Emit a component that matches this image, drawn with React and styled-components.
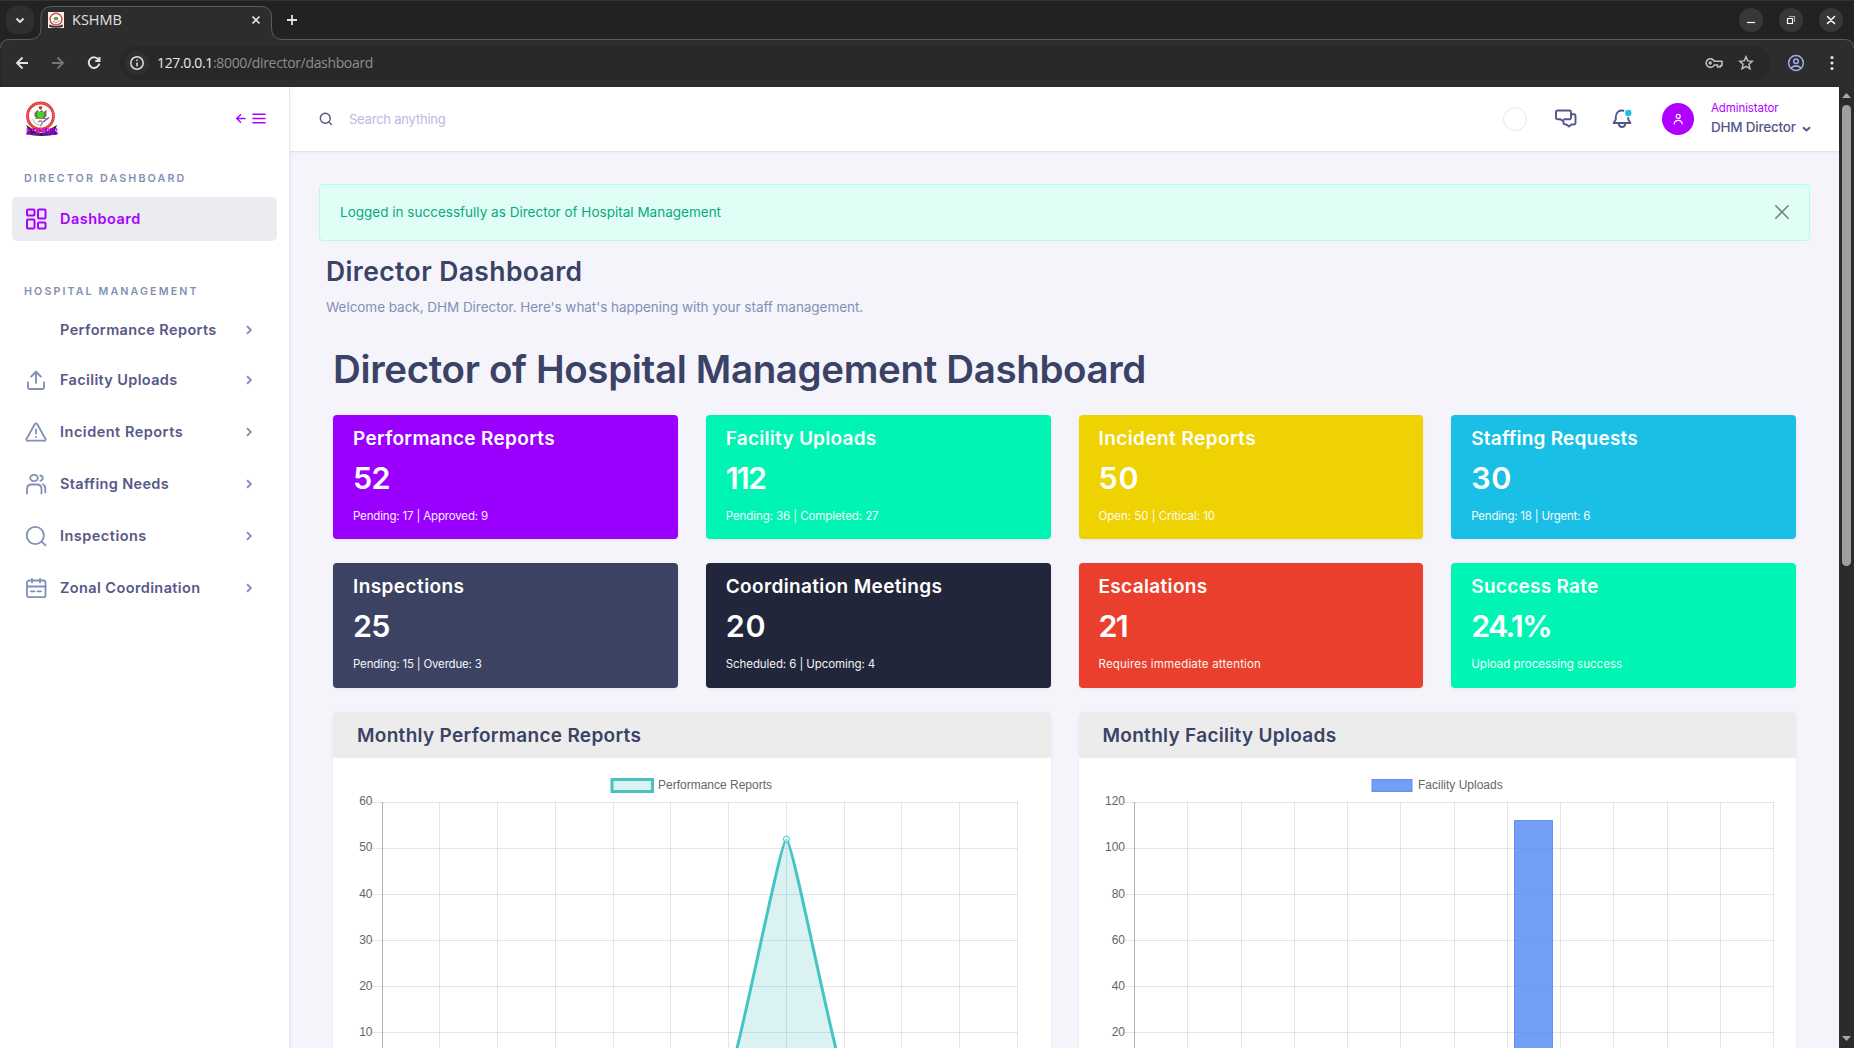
import React from 'react';
import styled, { createGlobalStyle } from 'styled-components';

const Global = createGlobalStyle`
  * { box-sizing: border-box; }
  html, body { margin: 0; padding: 0; }
  body { overflow: hidden; font-family: Inter, "Liberation Sans", sans-serif; color: #3a4266; }
  h1, h2, h3, p { margin: 0; }
  svg { display: block; flex: none; }
  button { border: 0; padding: 0; background: none; font: inherit; color: inherit; }
`;

const Window = styled.div`
  width: 1854px;
  height: 1048px;
  display: flex;
  flex-direction: column;
  overflow: hidden;
  background: #222;
`;

/* ---------- browser frame ---------- */
const Frame = styled.header`
  position: relative;
  height: 87px;
  flex: none;
  border-bottom: 1px solid #111;
  border-top: 1px solid #333;
  font-family: "Open Sans", "Noto Sans", sans-serif;
`;
const TabOutline = styled.svg`
  position: absolute;
  left: 0;
  top: -1px;
`;
const TabStrip = styled.div`
  position: relative;
  height: 38px;
  display: flex;
  align-items: center;
  padding: 0 11px 0 6px;
`;
const TabSearch = styled.button`
  width: 28px;
  height: 28px;
  border-radius: 10px;
  background: #2f2f2f;
  display: grid;
  place-items: center;
`;
const Tab = styled.div`
  width: 231px;
  margin-left: 7px;
  padding: 0 11px 0 7px;
  display: flex;
  align-items: center;
`;
const TabTitle = styled.span`
  flex: 1;
  margin-left: 8px;
  font-size: 14.5px;
  line-height: 20px;
  color: #e3e3e3;
`;
const NewTab = styled.button`
  margin-left: 14px;
`;
const WindowButtons = styled.div`
  margin-left: auto;
  display: flex;
  gap: 16px;
`;
const WindowButton = styled.button`
  width: 24px;
  height: 24px;
  border-radius: 50%;
  background: #373737;
  display: grid;
  place-items: center;
`;
const Toolbar = styled.div`
  position: relative;
  height: 48px;
  display: flex;
  align-items: center;
  padding: 0 20px 0 13px;
`;
const NavButtons = styled.div`
  display: flex;
  gap: 18px;
`;
const Omnibox = styled.div`
  flex: 1;
  height: 34px;
  margin: 0 17px 0 17px;
  padding: 0 16px 0 5px;
  border-radius: 17px;
  background: #282828;
  display: flex;
  align-items: center;
  gap: 15px;
`;
const SiteInfo = styled.span`
  width: 24px;
  height: 24px;
  border-radius: 50%;
  background: #303030;
  display: grid;
  place-items: center;
`;
const Url = styled.span`
  flex: 1;
  margin-left: -7px;
  font-size: 14px;
  line-height: 20px;
  letter-spacing: -0.34px;
  color: #8e8e8e;
`;
const Host = styled.span`
  color: #e8e8e8;
`;
const BarIcons = styled.div`
  display: flex;
  gap: 25px;
  align-items: center;
`;

/* ---------- page ---------- */
const Page = styled.div`
  flex: 1;
  display: flex;
  min-height: 0;
  background: #f5f4fb;
`;
const Sidebar = styled.aside`
  width: 290px;
  flex: none;
  background: #fff;
  border-right: 1px solid #e8e6f2;
  box-shadow: 1px 0 3px rgba(80, 70, 160, 0.06);
  z-index: 1;
`;
const SidebarHead = styled.div`
  height: 64px;
  padding: 0 23px 0 25px;
  display: flex;
  align-items: center;
  justify-content: space-between;
`;
const SectionLabel = styled.div`
  padding-left: 24px;
  font-size: 10.7px;
  line-height: 16px;
  font-weight: 600;
  letter-spacing: ${p => p.$ls}px;
  color: #8390b6;
  margin-top: ${p => p.$top}px;
`;
const Menu = styled.nav`
  margin: ${p => p.$top}px 12px 0;
  display: flex;
  flex-direction: column;
  gap: 8px;
`;
const MenuItem = styled.a`
  height: ${p => p.$h || 44}px;
  padding: 0 24px 0 12px;
  border-radius: 5px;
  display: flex;
  align-items: center;
  font-size: 14.5px;
  line-height: 20px;
  font-weight: 600;
  letter-spacing: ${p => p.$ls}px;
  color: ${p => (p.$active ? '#a900ff' : '#575887')};
  background: ${p => (p.$active ? '#ebecf2' : 'transparent')};
`;
const MenuIcon = styled.span`
  width: 24px;
  height: 24px;
  margin-right: 12px;
  color: ${p => (p.$active ? '#a900ff' : '#8390b6')};
`;
const MenuText = styled.span`
  flex: 1;
  white-space: nowrap;
`;
const Main = styled.main`
  flex: 1;
  min-width: 0;
  display: flex;
  flex-direction: column;
`;
const TopBar = styled.div`
  height: 65px;
  flex: none;
  padding: 0 28px 0 29px;
  display: flex;
  align-items: center;
  background: #fff;
  border-bottom: 1px solid #e4e2f0;
  box-shadow: 0 1px 3px rgba(80, 70, 160, 0.06);
`;
const SearchText = styled.span`
  flex: 1;
  margin-left: 16px;
  padding-bottom: 1px;
  font-size: 13px;
  line-height: 18px;
  letter-spacing: -0.22px;
  color: #bcb9e2;
`;
const Ring = styled.span`
  width: 24px;
  height: 24px;
  border-radius: 50%;
  border: 1px solid #e7e4f4;
`;
const IconSlot = styled.span`
  margin-left: ${p => p.$left}px;
`;
const Avatar = styled.span`
  width: 32px;
  height: 32px;
  margin-left: 29px;
  border-radius: 50%;
  background: #b000ff;
  display: grid;
  place-items: center;
`;
const UserInfo = styled.div`
  width: 100px;
  margin-left: 17px;
  padding-bottom: 2px;
`;
const UserRole = styled.div`
  font-size: 11.5px;
  line-height: 16px;
  letter-spacing: -0.09px;
  color: #b000ff;
`;
const UserName = styled.div`
  display: flex;
  align-items: center;
  justify-content: space-between;
  margin-top: 2px;
  font-size: 13.5px;
  line-height: 18px;
  font-weight: 550;
  letter-spacing: -0.22px;
  white-space: nowrap;
  color: #54568a;
`;
const Caret = styled.svg`
  margin-top: 3px;
`;
const Content = styled.div`
  padding: 32px 29px 0 29px;
`;
const Alert = styled.div`
  height: 57px;
  padding: 0 20px 2px 20px;
  display: flex;
  align-items: center;
  justify-content: space-between;
  border: 1px solid #b3fde8;
  border-radius: 4px;
  background: #e1fef6;
  font-size: 13.5px;
  line-height: 20px;
  letter-spacing: 0.01px;
  color: #08aa7c;
`;
const PageHead = styled.div`
  padding: 13px 7px 0;
`;
const PageTitle = styled.h2`
  font-size: 26.5px;
  line-height: 34px;
  font-weight: 600;
  letter-spacing: 0.4px;
`;
const Welcome = styled.p`
  margin-top: 9px;
  font-size: 13.5px;
  line-height: 20px;
  letter-spacing: -0.04px;
  color: #8390b6;
`;
const Board = styled.section`
  padding: 28px 14px 0;
`;
const BoardTitle = styled.h1`
  font-size: 38.5px;
  line-height: 48px;
  font-weight: 600;
  letter-spacing: -0.36px;
  white-space: nowrap;
`;
const StatGrid = styled.div`
  margin-top: 22px;
  display: grid;
  grid-template-columns: repeat(4, 1fr);
  grid-auto-rows: 124.3px;
  gap: 24px 28px;
`;
const StatCard = styled.article`
  padding: 12px 20px 0;
  border-radius: 4px;
  background: ${p => p.$bg};
  color: #fff;
  box-shadow: 0 1px 3px rgba(54, 66, 99, 0.08);
`;
const StatTitle = styled.h3`
  font-size: 19px;
  line-height: 24px;
  font-weight: 600;
  letter-spacing: ${p => p.$ls}px;
`;
const StatValue = styled.div`
  margin-top: 7px;
  font-size: 30.5px;
  line-height: 40px;
  font-weight: 600;
  letter-spacing: ${p => p.$ls}px;
`;
const StatNote = styled.div`
  margin-top: 9px;
  font-size: 11.5px;
  line-height: 18px;
  letter-spacing: ${p => p.$ls}px;
  opacity: 0.95;
`;
const ChartGrid = styled.div`
  margin-top: 24.4px;
  display: grid;
  grid-template-columns: repeat(2, 1fr);
  gap: 28px;
`;
const ChartCard = styled.article`
  height: 400px;
  overflow: hidden;
  border-radius: 4px 4px 0 0;
  background: #fff;
  box-shadow: 0 1px 3px rgba(54, 66, 99, 0.08);
`;
const ChartHead = styled.h3`
  height: 46px;
  padding: 1px 24px 0;
  font-size: 19px;
  line-height: 46px;
  font-weight: 600;
  letter-spacing: 0.3px;
  background: #ececec;
`;
const ChartText = styled.text`
  font-family: "Liberation Sans", Arial, sans-serif;
  font-size: 12px;
  fill: #666;
`;
const ScrollTrack = styled.div`
  width: 15px;
  flex: none;
  padding: 6px 0 7px;
  display: flex;
  flex-direction: column;
  align-items: center;
  background: #2b2b2b;
`;
const ScrollThumb = styled.div`
  width: 9px;
  height: 461px;
  margin: 7px 0 auto;
  border-radius: 5px;
  background: #9f9f9f;
`;

/* ---------- drawings ---------- */
const Icon = ({ size = 24, box = 24, w = 2, children, color = 'currentColor' }) => (
  <svg width={size} height={size} viewBox={`0 0 ${box} ${box}`} fill="none" stroke={color} strokeWidth={w} strokeLinecap="round" strokeLinejoin="round">
    {children}
  </svg>
);

const Crest = () => (
  <svg width="34" height="40" viewBox="0 0 34 40">
    <path d="M1 26 L6 29 L9 32 Q16 36 23 32 L27 29 L32 26 L30 32 L33 35 Q16 39 1 35 L4 32 Z" fill="#2a2330" />
    <circle cx="15.500" cy="17" r="13" fill="#fff" stroke="#e5332c" strokeWidth="2.800" />
    <circle cx="15.500" cy="17" r="13" fill="none" stroke="#f7b5ad" strokeWidth="1" strokeDasharray="1 1.400" />
    <path d="M13.500 7.500 h4 l-1 3 h-2 z" fill="#c3263a" />
    <path d="M9.500 14 l3-3 2 2 2-2 2 2 3-2 0 6 -2 2 h-8 l-2-2 z" fill="#7a6a50" />
    <path d="M12 13 h7 v3.500 q-1 3 -3.500 3.500 q-2.500-.500-3.500-3.500 z" fill="#3fd335" />
    <path d="M10 19.500 h11" stroke="#b07a30" strokeWidth="1" />
    <path d="M7.500 20 q2 5 7 6.500" stroke="#8fc7a0" strokeWidth="1" fill="none" />
    <path d="M13 23 q3-2 4 0 t-2 4" stroke="#8b8398" strokeWidth="1.300" fill="none" />
    <path d="M18 23 l6-4.500" stroke="#6b3fae" strokeWidth="1.300" />
    <path d="M7 30 q8.500 3.500 17 0" stroke="#e5332c" strokeWidth="3" fill="none" strokeDasharray="3 1" />
    <text x="1" y="35.500" textLength="32" lengthAdjust="spacingAndGlyphs" fontFamily="Inter, sans-serif" fontSize="9.500" fontWeight="600" fill="#a900ff">KSHMB</text>
  </svg>
);

const Favicon = () => (
  <svg width="16" height="16" viewBox="0 0 16 16">
    <rect width="16" height="16" fill="#f6f0f0" />
    <path d="M1 12.500 L4 13.500 Q8 15 12 13.500 L15 12.500 L14.500 15 Q8 16.500 1.500 15 Z" fill="#2a2330" />
    <circle cx="8" cy="7.200" r="5.900" fill="#fff" stroke="#dc5046" strokeWidth="1.500" />
    <path d="M5.500 6 q2.500-2.500 5 0 l-.800 2.200 h-3.400 z" fill="#5ba94b" />
    <path d="M5 9 l3 2 3.500-2.500" stroke="#8b78a8" strokeWidth=".900" fill="none" />
  </svg>
);

const icons = {
  dashboard: (
    <Icon w={2}>
      <rect x="3" y="2.500" width="7.500" height="6" rx="1" />
      <rect x="14" y="2.500" width="7.500" height="9" rx="1" />
      <rect x="3" y="12.500" width="7.500" height="9" rx="1" />
      <rect x="14" y="15.500" width="7.500" height="6" rx="1" />
    </Icon>
  ),
  upload: (
    <Icon w={1.9}>
      <path d="M4 14.500 V19.500 a1.500 1.500 0 0 0 1.500 1.500 h13 a1.500 1.500 0 0 0 1.500-1.500 V14.500" />
      <path d="M12 15 V4" />
      <path d="M7.200 8.500 L12 3.800 L16.800 8.500" />
    </Icon>
  ),
  alert: (
    <Icon w={1.8}>
      <path d="M10.700 4.200 L3.100 18 a1.500 1.500 0 0 0 1.300 2.700 h15.200 a1.500 1.500 0 0 0 1.300 -2.700 L13.300 4.200 a1.500 1.500 0 0 0 -2.600 0 z" />
      <path d="M12 9.500 V13.500" />
      <path d="M12 17 v.200" />
    </Icon>
  ),
  users: (
    <Icon w={1.8}>
      <ellipse cx="10" cy="6" rx="3.800" ry="3.200" />
      <path d="M3 21.500 V17 q0-4.500 4.500-4.500 h5.500 q4.500 0 4.500 4.500 v4.500" />
      <path d="M16.300 3.500 q2.500 .500 2.500 2.500 t-2.500 2.800" />
      <path d="M19 12.200 q2.300 1.300 2.300 4.300 v4" />
    </Icon>
  ),
  search: (
    <Icon w={1.8}>
      <circle cx="11.300" cy="11.500" r="8.600" />
      <path d="M17.800 17.800 L21.500 21.300" />
    </Icon>
  ),
  calendar: (
    <Icon w={1.8}>
      <rect x="3" y="4.500" width="18.500" height="16.700" rx="2" />
      <path d="M8 3 v3.500 M16 3 v3.500 M3 10.500 h18.500 M7 15.300 h3.500 M13.500 15.300 h3.500" />
    </Icon>
  ),
};

const Chevron = () => (
  <svg width="8" height="12" viewBox="0 0 8 12" fill="none" stroke="#8390b6" strokeWidth="1.900">
    <path d="M2 2.200 L5.800 6 L2 9.800" />
  </svg>
);

const items = [
  { label: 'Performance Reports', ls: 0.38, h: 40 },
  { label: 'Facility Uploads', ls: 0.36, icon: 'upload' },
  { label: 'Incident Reports', ls: 0.5, icon: 'alert' },
  { label: 'Staffing Needs', ls: 0.34, icon: 'users' },
  { label: 'Inspections', ls: 0.48, icon: 'search' },
  { label: 'Zonal Coordination', ls: 0.4, icon: 'calendar' },
];

const stats = [
  { title: 'Performance Reports', value: '52', note: 'Pending: 17 | Approved: 9', bg: '#9b00ff', ls: [0.32, -0.8, -0.16] },
  { title: 'Facility Uploads', value: '112', note: 'Pending: 36 | Completed: 27', bg: '#00f5b4', ls: [0.26, -1.8, -0.08] },
  { title: 'Incident Reports', value: '50', note: 'Open: 50 | Critical: 10', bg: '#efd202', ls: [0.42, 0.9, -0.02] },
  { title: 'Staffing Requests', value: '30', note: 'Pending: 18 | Urgent: 6', bg: '#1abfe5', ls: [0.22, 0.6, -0.21] },
  { title: 'Inspections', value: '25', note: 'Pending: 15 | Overdue: 3', bg: '#3b4262', ls: [0.42, -0.8, -0.18] },
  { title: 'Coordination Meetings', value: '20', note: 'Scheduled: 6 | Upcoming: 4', bg: '#22263a', ls: [0.36, 0.8, -0.08] },
  { title: 'Escalations', value: '21', note: 'Requires immediate attention', bg: '#eb3f2d', ls: [0.34, -1.8, 0.18] },
  { title: 'Success Rate', value: '24.1%', note: 'Upload processing success', bg: '#00f5b4', ls: [0.28, -1.75, 0.02] },
];

/* Horizontal grid lines every 46px, one vertical line per month step. */
const Grid = ({ left, right, steps, labels }) => {
  const step = (right - left) / steps;
  return (
    <g strokeWidth="1" stroke="rgba(0,0,0,0.1)">
      {labels.map((l, i) => (
        <line key={l} x1={left - 10} x2={right} y1={44.5 + i * 46} y2={44.5 + i * 46} />
      ))}
      {Array.from({ length: steps + 1 }, (_, i) => {
        const x = Math.floor(left + i * step) + 0.5;
        return <line key={i} x1={x} x2={x} y1="44" y2="330" stroke={i ? 'rgba(0,0,0,0.1)' : 'rgba(0,0,0,0.3)'} />;
      })}
      {labels.map((l, i) => (
        <ChartText key={l} x={left - 9.5} y={47 + i * 46 + (i > 1 ? 1 : 0)} textAnchor="end" stroke="none">{l}</ChartText>
      ))}
    </g>
  );
};

const LineChart = () => (
  <svg width="718" height="340" viewBox="0 0 718 340">
    <rect x="279" y="21.500" width="40.500" height="12" fill="rgba(75,192,192,0.2)" stroke="#4bc0c0" strokeWidth="3" />
    <ChartText x="325" y="31">Performance Reports</ChartText>
    <Grid left={49} right={684.5} steps={11} labels={[60, 50, 40, 30, 20, 10]} />
    <path d="M395.700 320.500 C405 301 447.500 81.300 453.400 81.300 C459.300 81.300 501.800 301 511.100 320.500 Z" fill="rgba(75,192,192,0.2)" />
    <path d="M395.700 320.500 C405 301 447.500 81.300 453.400 81.300 C459.300 81.300 501.800 301 511.100 320.500" fill="none" stroke="#45c4c4" strokeWidth="3" />
    <circle cx="453.400" cy="81" r="3" fill="rgba(255,255,255,0.6)" stroke="#45c4c4" strokeWidth="1" />
  </svg>
);

const BarChart = () => (
  <svg width="718" height="340" viewBox="0 0 718 340">
    <rect x="293" y="21.500" width="40" height="12" fill="#729ff5" stroke="#5f93f2" strokeWidth="1" />
    <ChartText x="339" y="31">Facility Uploads</ChartText>
    <Grid left={55.5} right={694.5} steps={12} labels={[120, 100, 80, 60, 40, 20]} />
    <path d="M435.500 330 V62.500 H473.500 V330" fill="rgba(79,135,242,0.8)" stroke="#5f93f2" strokeWidth="1" />
  </svg>
);

export default function App() {
  return (
    <Window>
      <Global />
      <Frame>
        <TabOutline width="1854" height="87" viewBox="0 0 1854 87">
          <path d="M0.500 90 V48 Q0.500 39.500 9 39.500 H29 Q41 39.500 41 28 V17 Q41 6.500 52 6.500 H261 Q271.500 6.500 271.500 17 V28 Q271.500 39.500 283 39.500 H1845 Q1853.500 39.500 1853.500 48 V90 Z" fill="#2d2d2d" />
          <path d="M0.500 48 Q0.500 39.500 9 39.500 H29 Q41 39.500 41 28 V17 Q41 6.500 52 6.500 H261 Q271.500 6.500 271.500 17 V28 Q271.500 39.500 283 39.500 H1845 Q1853.500 39.500 1853.500 48" fill="none" stroke="#5c5c5c" />
        </TabOutline>
        <TabStrip>
          <TabSearch><Icon size={12} box={12} w={1.9} color="#e3e3e3"><path d="M2.500 4.500 L6 8 L9.500 4.500" strokeLinecap="butt" /></Icon></TabSearch>
          <Tab>
            <Favicon />
            <TabTitle>KSHMB</TabTitle>
            <Icon size={10} box={10} w={1.7} color="#e3e3e3"><path d="M1.500 1.500 L8.500 8.500 M8.500 1.500 L1.500 8.500" strokeLinecap="butt" /></Icon>
          </Tab>
          <NewTab><Icon size={12} box={12} w={1.8} color="#e3e3e3"><path d="M6 1 V11 M1 6 H11" strokeLinecap="butt" /></Icon></NewTab>
          <WindowButtons>
            <WindowButton><Icon size={12} box={12} w={1.2} color="#fff"><path d="M2 8.500 H10" strokeLinecap="butt" /></Icon></WindowButton>
            <WindowButton><Icon size={12} box={12} w={1.2} color="#fff"><path d="M2.500 4.500 h5 v5 h-5 z" /><path d="M4.500 2.500 h5 v5" stroke="#aaa" /></Icon></WindowButton>
            <WindowButton><Icon size={12} box={12} w={1.5} color="#fff"><path d="M2.500 2.500 L9.500 9.500 M9.500 2.500 L2.500 9.500" /></Icon></WindowButton>
          </WindowButtons>
        </TabStrip>
        <Toolbar>
          <NavButtons>
            <Icon size={18} box={18} w={1.8} color="#e3e3e3"><path d="M15 9 H4 M9.500 3.500 L4 9 L9.500 14.500" strokeLinecap="butt" strokeLinejoin="miter" /></Icon>
            <Icon size={18} box={18} w={1.8} color="#757575"><path d="M3 9 H14 M8.500 3.500 L14 9 L8.500 14.500" strokeLinecap="butt" strokeLinejoin="miter" /></Icon>
            <Icon size={18} box={18} w={1.9} color="#e3e3e3"><path d="M13.700 6 A5.300 5.300 0 1 0 14.300 9.600 M14.500 3 V7 H10.300" strokeLinecap="butt" strokeLinejoin="miter" /></Icon>
          </NavButtons>
          <Omnibox>
            <SiteInfo><Icon size={16} box={16} w={1.5} color="#e0e0e0"><circle cx="8" cy="8" r="6.200" /><path d="M8 7.500 V11.300 M8 4.600 v1.400" strokeLinecap="butt" /></Icon></SiteInfo>
            <Url><Host>127.0.0.1</Host>:8000/director/dashboard</Url>
            <svg width="18" height="12" viewBox="0 0 18 12" fill="none" stroke="#c0c0c0" strokeWidth="1.600">
              <path d="M9.300 4.200 A4.300 4.300 0 1 0 9.300 8 H12.500 V10 H15.500 V8.500 H17 V4.200 Z" strokeLinejoin="round" />
              <circle cx="5.200" cy="6" r="1.700" fill="#c0c0c0" stroke="none" />
            </svg>
            <Icon size={16} box={16} w={1.4} color="#c4c4c4"><path d="M8 1.700 L9.800 5.900 L14.400 6.300 L10.900 9.300 L12 13.800 L8 11.400 L4 13.800 L5.100 9.300 L1.600 6.300 L6.200 5.900 Z" strokeLinejoin="miter" /></Icon>
          </Omnibox>
          <BarIcons>
            <Icon size={18} box={18} w={1.5} color="#a3adf0"><circle cx="9" cy="9" r="7.400" /><circle cx="9" cy="7.300" r="2.300" /><path d="M4 14 Q9 9.800 14 14" /></Icon>
            <svg width="4" height="16" viewBox="0 0 4 16" fill="#e3e3e3"><circle cx="2" cy="2.500" r="1.600" /><circle cx="2" cy="8" r="1.600" /><circle cx="2" cy="13.500" r="1.600" /></svg>
          </BarIcons>
        </Toolbar>
      </Frame>
      <Page>
        <Sidebar>
          <SidebarHead>
            <Crest />
            <svg width="31" height="12" viewBox="0 0 31 12" fill="none" stroke="#a900ff" strokeWidth="1.400">
              <path d="M10.500 5.500 H2 M6 1.200 L1.700 5.500 L6 9.800" />
              <path d="M17.500 1.200 H30.500 M17.500 5.500 H30.500 M17.500 9.800 H30.500" />
            </svg>
          </SidebarHead>
          <SectionLabel $top={20} $ls={2.15}>DIRECTOR DASHBOARD</SectionLabel>
          <Menu $top={10}>
            <MenuItem $active $ls={0.48}>
              <MenuIcon $active>{icons.dashboard}</MenuIcon>
              <MenuText>Dashboard</MenuText>
            </MenuItem>
          </Menu>
          <SectionLabel $top={43} $ls={2.1}>HOSPITAL MANAGEMENT</SectionLabel>
          <Menu $top={10}>
            {items.map(it => (
              <MenuItem key={it.label} $ls={it.ls} $h={it.h}>
                <MenuIcon>{icons[it.icon]}</MenuIcon>
                <MenuText>{it.label}</MenuText>
                <Chevron />
              </MenuItem>
            ))}
          </Menu>
        </Sidebar>
        <Main>
          <TopBar>
            <Icon size={14} box={14} w={1.4} color="#54568a"><circle cx="6.300" cy="6.300" r="5" /><path d="M10 10 L12.500 12.500" /></Icon>
            <SearchText>Search anything</SearchText>
            <Ring />
            <IconSlot $left={28}>
              <Icon size={22} box={22} w={1.9} color="#54568a">
                <path d="M2.500 2.500 H14.500 a1.500 1.500 0 0 1 1.500 1.500 V9.800 a1.500 1.500 0 0 1 -1.500 1.500 H9.500 L7.300 12.800 L5.500 11.300 H2.500 a1.500 1.500 0 0 1 -1.500 -1.500 V4 a1.500 1.500 0 0 1 1.500 -1.500 z" />
                <path d="M16.500 6.300 h2.500 a1.500 1.500 0 0 1 1.500 1.500 V15 a1.500 1.500 0 0 1 -1.500 1.500 H16.500 L14 18.500 L11.500 16.500 H10 a1.500 1.500 0 0 1 -1.500 -1.500 V13.500" />
              </Icon>
            </IconSlot>
            <IconSlot $left={34}>
              <Icon size={22} box={22} w={1.9} color="#54568a">
                <path d="M12.500 2.700 Q5.500 1.700 4.800 8.500 V11.500 L2.600 15 H19.400 L17.200 11.500 V10" />
                <path d="M7.800 16 Q8.200 19 11 19 Q13.800 19 14.200 16" />
                <circle cx="17.300" cy="5" r="3.200" fill="#1abfe5" stroke="none" />
              </Icon>
            </IconSlot>
            <Avatar>
              <Icon size={12} box={12} w={1.2} color="#fff"><circle cx="6.200" cy="3.400" r="2" /><path d="M2.200 11 Q2.600 7.400 6.200 7.400 T10.200 11" /></Icon>
            </Avatar>
            <UserInfo>
              <UserRole>Administator</UserRole>
              <UserName>
                DHM Director
                <Caret width="9" height="6" viewBox="0 0 9 6" fill="none" stroke="#54568a" strokeWidth="1.900"><path d="M1 1.200 L4.500 4.500 L8 1.200" /></Caret>
              </UserName>
            </UserInfo>
          </TopBar>
          <Content>
            <Alert>
              Logged in successfully as Director of Hospital Management
              <Icon size={14} box={14} w={1.6} color="#748881"><path d="M0.800 0.800 L13.200 13.200 M13.200 0.800 L0.800 13.200" /></Icon>
            </Alert>
            <PageHead>
              <PageTitle>Director Dashboard</PageTitle>
              <Welcome>Welcome back, DHM Director. Here's what's happening with your staff management.</Welcome>
            </PageHead>
            <Board>
              <BoardTitle>Director of Hospital Management Dashboard</BoardTitle>
              <StatGrid>
                {stats.map(s => (
                  <StatCard key={s.title} $bg={s.bg}>
                    <StatTitle $ls={s.ls[0]}>{s.title}</StatTitle>
                    <StatValue $ls={s.ls[1]}>{s.value}</StatValue>
                    <StatNote $ls={s.ls[2]}>{s.note}</StatNote>
                  </StatCard>
                ))}
              </StatGrid>
              <ChartGrid>
                <ChartCard>
                  <ChartHead>Monthly Performance Reports</ChartHead>
                  <LineChart />
                </ChartCard>
                <ChartCard>
                  <ChartHead>Monthly Facility Uploads</ChartHead>
                  <BarChart />
                </ChartCard>
              </ChartGrid>
            </Board>
          </Content>
        </Main>
        <ScrollTrack>
          <svg width="9" height="5" viewBox="0 0 9 5" fill="#a8a8a8"><path d="M0 5 L4.500 0 L9 5 Z" /></svg>
          <ScrollThumb />
          <svg width="9" height="5" viewBox="0 0 9 5" fill="#a8a8a8"><path d="M0 0 L4.500 5 L9 0 Z" /></svg>
        </ScrollTrack>
      </Page>
    </Window>
  );
}
